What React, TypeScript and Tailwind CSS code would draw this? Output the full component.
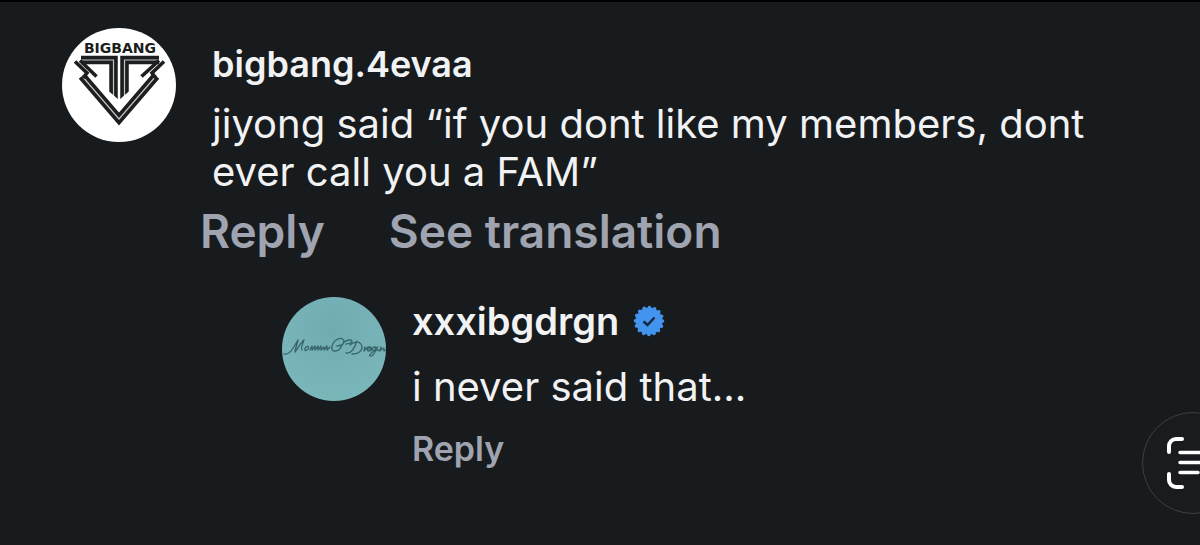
import type { ReactNode } from 'react';

interface CommentProps {
  avatar: ReactNode;
  username: string;
  usernameClass: string;
  verified?: boolean;
  text: string;
  textClass: string;
  rowClass: string;
  actions: string[];
  actionsClass: string;
}

// both the black bands and the thin line inside them follow these
const stemBands = ['M19 32H51.500V72', 'M97 32H62.500V72'];
const chevron = 'M20 48L57 91L94 48';

function BigbangAvatar() {
  return (
    <svg viewBox="0 0 114 114" className="size-[114px] shrink-0" role="img" aria-label="bigbang.4evaa">
      <circle cx="57" cy="57" r="57" fill="#fff" />
      <text
        x="58"
        y="25"
        textAnchor="middle"
        className="font-['DejaVu_Sans',sans-serif] text-[14px] font-bold"
        fill="#1c1e20"
      >
        BIGBANG
      </text>
      <g fill="none" stroke="#1c1e20" strokeWidth="8.5">
        {stemBands.map((d) => (
          <path key={d} d={d} />
        ))}
      </g>
      <g fill="none" stroke="#c4c4c4" strokeWidth="1.2">
        {stemBands.map((d) => (
          <path key={d} d={d} />
        ))}
      </g>
      <path d="M46 62.500l11 9.500 11-9.500V74H46z" fill="#fff" />
      <path d="M14 27v8l6-1zM102 27v8l-6-1z" fill="#fff" />
      <path d={chevron} fill="none" stroke="#1c1e20" strokeWidth="8.5" />
      <path d={chevron} fill="none" stroke="#c4c4c4" strokeWidth="1.2" />
      <g fill="none" stroke="#1c1e20" strokeWidth="3.6">
        <path d="M13 33.500l12 11.500-4 5" />
        <path d="M18 32.500l16.500 16" />
        <path d="M102 33.500L90 45l4 5" />
        <path d="M97 32.500L79.500 48.500" />
      </g>
    </svg>
  );
}

function DragonAvatar() {
  return (
    <svg viewBox="0 0 104 104" className="size-[104px] shrink-0" role="img" aria-label="xxxibgdrgn">
      <defs>
        <radialGradient id="paper" cx="50%" cy="30%" r="75%">
          <stop offset="0" stopColor="#70abb2" />
          <stop offset="1" stopColor="#7bb8ba" />
        </radialGradient>
      </defs>
      <circle cx="52" cy="52" r="52" fill="url(#paper)" />
      <g fill="none" stroke="#37646b" strokeWidth="1.3" strokeLinecap="round" strokeLinejoin="round">
        <path d="M2 57c7 1 10-8 14-14-1 5-3 9-3 12 3-4 6-10 9-12-2 5-3 9-2 10" />
        <path d="M24 50c-3 3 0 5 2 2s-1-3-2-2m4 3l2-4 0 4 3-4v4l3-4v4l3-4v4l3-3v3l3-4v4l3-3" />
        <path d="M60 48c4-4 1-8-4-6-7 3-8 13-3 12 4 0 6-3 7-6l-5 1" />
        <path d="M62 45c3-2 7-3 8-1 0 2-4 3-6 3m0 9c5 1 9-6 11-12m-5 13c8 0 12-5 9-10-2-3-8-2-11 1" />
        <path d="M82 54l1-4v3l3-3m2 0c-3 0-3 5-1 4l2-4v4m4-4c-4 0-3 5 0 3l1-3c0 6-4 10-6 9s4-5 7-7m1-2c-3 1-1 5 1 3m1 1l1-4v3l3-2v3l2-1" />
      </g>
    </svg>
  );
}

function VerifiedBadge() {
  return (
    <svg viewBox="0 0 32 32" className="size-8" role="img" aria-label="Verified">
      <circle cx="16" cy="16" r="13.500" fill="#4294ee" />
      {/* dashed ring gives the scalloped edge */}
      <circle
        cx="16"
        cy="16"
        r="13.500"
        fill="none"
        stroke="#4294ee"
        strokeWidth="3.600"
        strokeLinecap="round"
        strokeDasharray="0 5.3014"
      />
      <path d="M10.500 16.500l4 3.500 7-7.500" fill="none" stroke="#14283f" strokeWidth="2.400" />
    </svg>
  );
}

function ScanTextIcon() {
  return (
    <svg viewBox="0 0 52 52" className="size-[52px]" fill="none" stroke="#fff" strokeLinecap="round" aria-hidden="true">
      <path
        d="M15 2H9a7 7 0 0 0-7 7v6M37 2h6a7 7 0 0 1 7 7v6M15 50H9a7 7 0 0 1-7-7v-6M37 50h6a7 7 0 0 0 7-7v-6"
        strokeWidth="4"
      />
      <path d="M13 15.500h26M13 25.500h26M13 35.500h18" strokeWidth="3.500" />
    </svg>
  );
}

function Comment({
  avatar,
  username,
  usernameClass,
  verified,
  text,
  textClass,
  rowClass,
  actions,
  actionsClass,
}: CommentProps) {
  return (
    <article className={`flex items-start ${rowClass}`}>
      {avatar}
      <div className="min-w-0 flex-1">
        <div className={`flex items-center gap-3.5 leading-[48px] font-semibold ${usernameClass}`}>
          <h2>{username}</h2>
          {verified && <VerifiedBadge />}
        </div>
        <p className={`text-[40px] leading-[48px] ${textClass}`}>{text}</p>
        <div className={`flex font-semibold text-[#9fa4b0] ${actionsClass}`}>
          {actions.map((action) => (
            <button key={action} type="button" className="hover:text-white">
              {action}
            </button>
          ))}
        </div>
      </div>
    </article>
  );
}

export default function App() {
  return (
    <main className="relative min-h-screen overflow-hidden border-t-2 border-black bg-[#181b1e] pt-[26px] font-['Inter',sans-serif] text-[#f1f2f3]">
      <Comment
        avatar={<BigbangAvatar />}
        username="bigbang.4evaa"
        usernameClass="pt-3 text-[36px]"
        text="jiyong said “if you dont like my members, dont ever call you a FAM”"
        textClass="pt-3"
        rowClass="gap-9 pr-20 pl-[62px]"
        actions={['Reply', 'See translation']}
        actionsClass="-ml-3 gap-16 pt-[7px] text-[46px] leading-[56px]"
      />
      <Comment
        avatar={<DragonAvatar />}
        username="xxxibgdrgn"
        usernameClass="text-[38px]"
        verified
        text="i never said that..."
        textClass="pt-[18px]"
        rowClass="gap-[26px] pt-[38px] pr-20 pl-[282px]"
        actions={['Reply']}
        actionsClass="pt-3.5 text-[34px] leading-[48px]"
      />
      <button
        type="button"
        aria-label="Scan text"
        className="absolute -right-11 bottom-[31px] flex size-[102px] items-center justify-center rounded-full border border-[#3d4043] bg-[#1a1b1e]"
      >
        <ScanTextIcon />
      </button>
    </main>
  );
}
